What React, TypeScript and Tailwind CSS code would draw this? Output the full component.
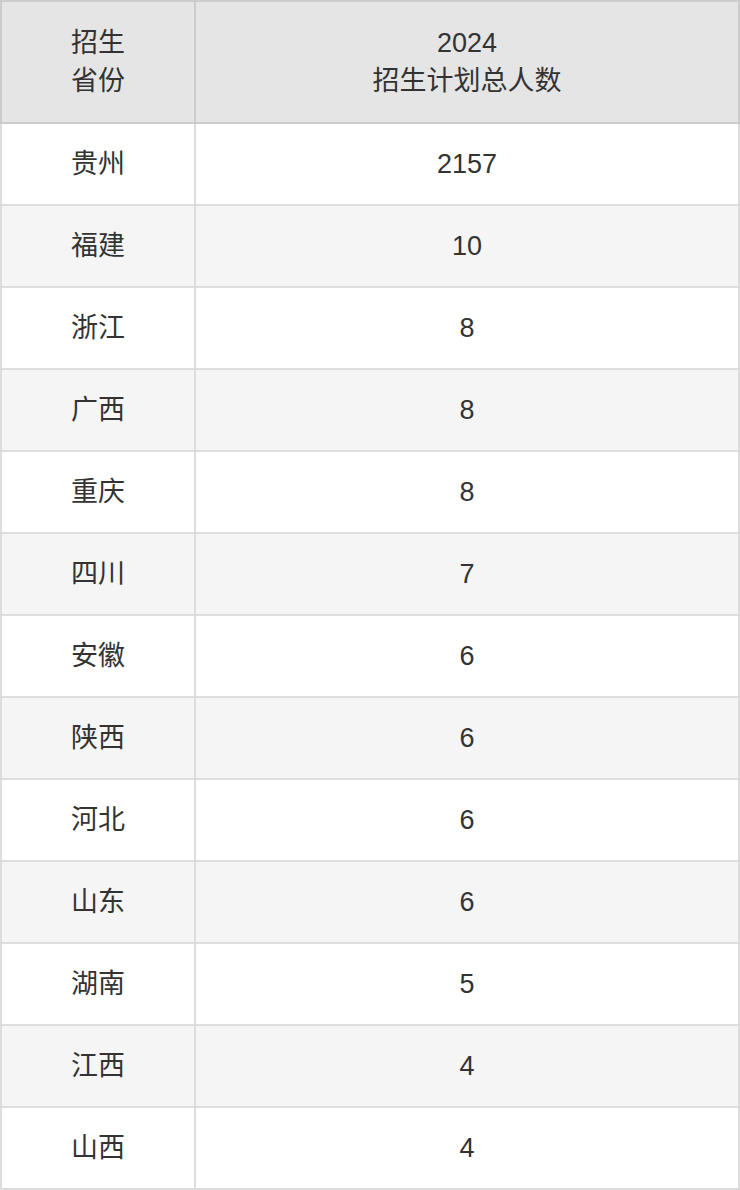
const rows: [string, string][] = [
  ["贵州", "2157"],
  ["福建", "10"],
  ["浙江", "8"],
  ["广西", "8"],
  ["重庆", "8"],
  ["四川", "7"],
  ["安徽", "6"],
  ["陕西", "6"],
  ["河北", "6"],
  ["山东", "6"],
  ["湖南", "5"],
  ["江西", "4"],
  ["山西", "4"],
];

export default function App() {
  return (
    <div
      className="w-[740px] bg-white text-[#333]"
      style={{ fontFamily: '"Liberation Sans", Arial, "Noto Sans CJK SC", sans-serif' }}
    >
      <table className="w-[740px] border-collapse table-fixed text-[27px] leading-[38px]">
        <colgroup>
          <col className="w-[194px]" />
          <col />
        </colgroup>
        <thead>
          <tr className="h-[122px] bg-[#e5e5e5]">
            <th className="border-2 border-[#ccc] font-normal text-center">
              招生
              <br />
              省份
            </th>
            <th className="border-2 border-[#ccc] font-normal text-center">
              2024
              <br />
              招生计划总人数
            </th>
          </tr>
        </thead>
        <tbody>
          {rows.map(([p, n], i) => (
            <tr key={p} className={i % 2 === 0 ? "h-[82px] bg-white" : "h-[82px] bg-[#f5f5f5]"}>
              <td className="border-2 border-[#ddd] text-center">{p}</td>
              <td className="border-2 border-[#ddd] text-center">{n}</td>
            </tr>
          ))}
        </tbody>
      </table>
    </div>
  );
}
